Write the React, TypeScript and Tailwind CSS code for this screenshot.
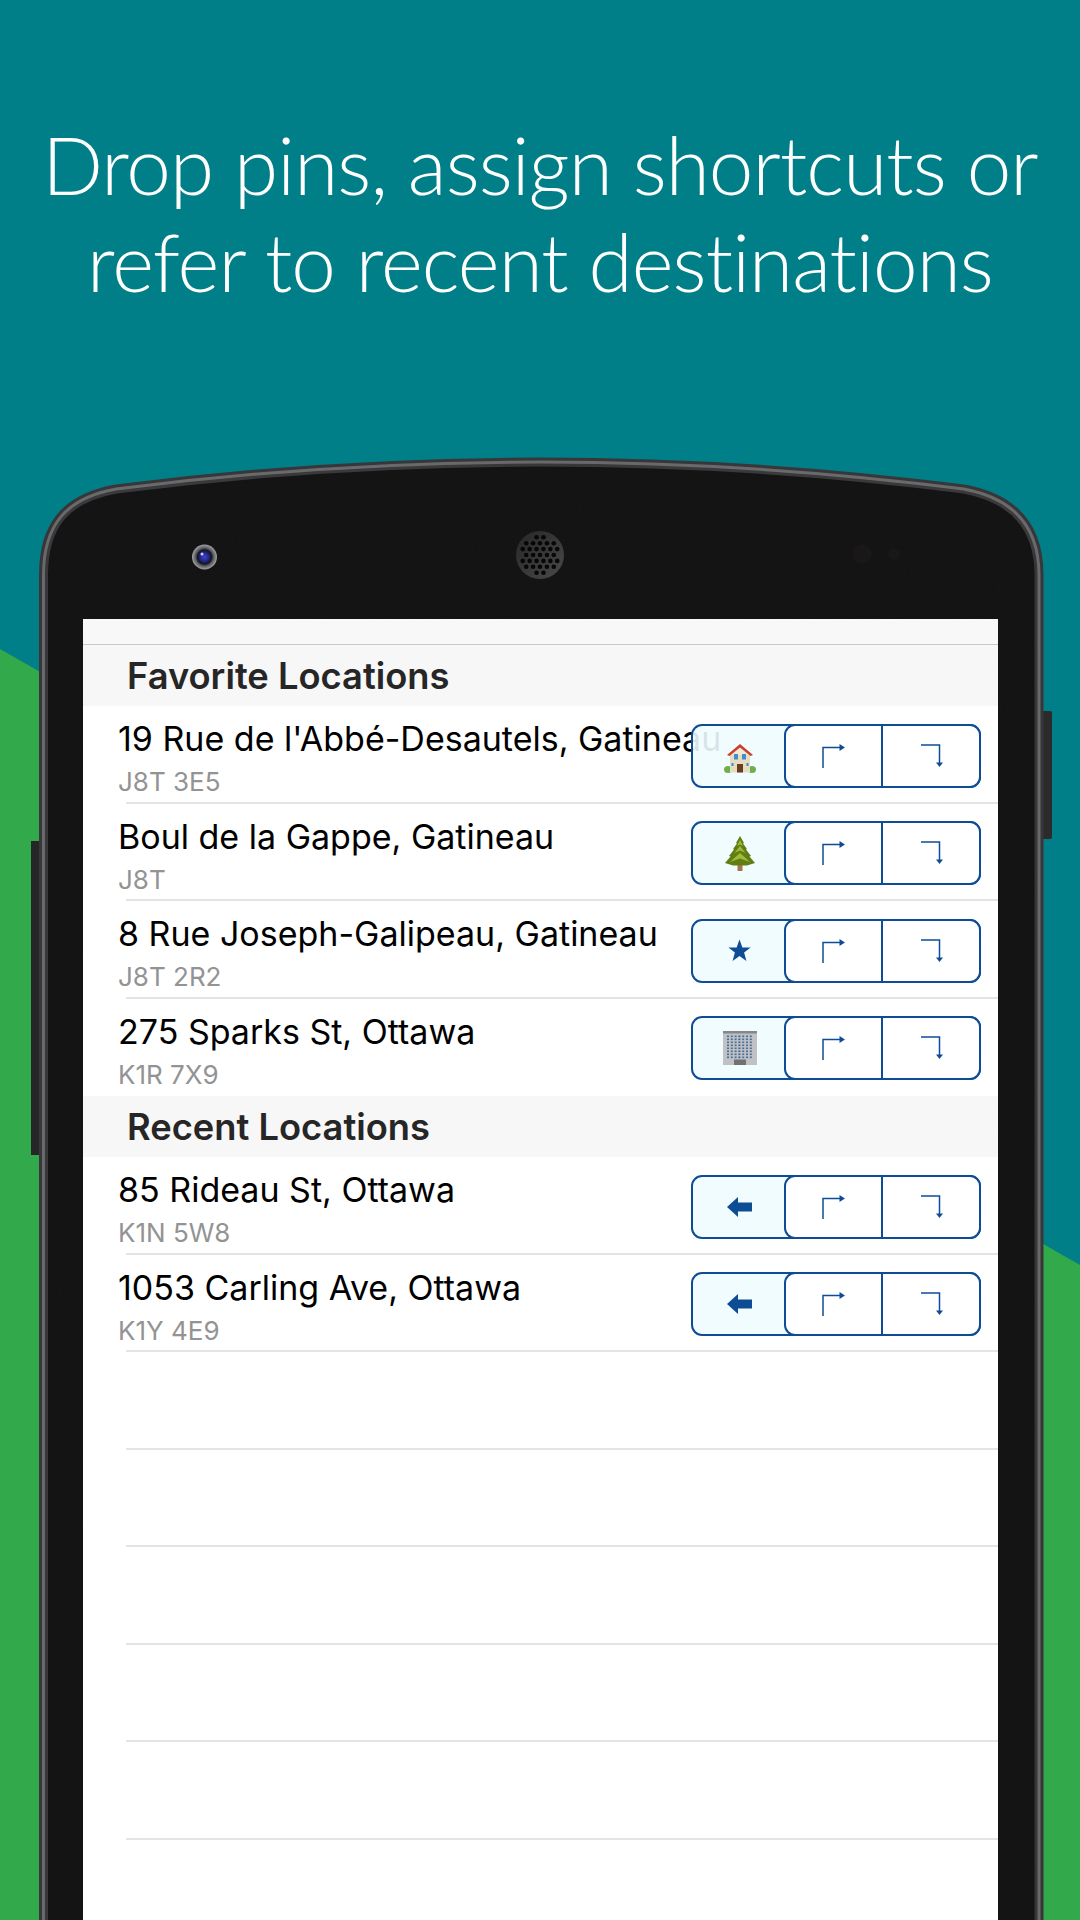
import React from "react";

const BLUE = "#0f4c96";

const PHONE_EDGE =
  "M43.5 1930 L43.5 575 C43.5 525 66 498 116 489 Q540 435 964 489 C1012 498 1039 525 1039 575 L1039 1930 Z";

// speaker grille holes, packed in rows
const speakerDots: { x: number; y: number }[] = [];
for (let row = -4; row <= 4; row++) {
  for (let col = -4; col <= 4; col++) {
    const x = col * 6.9 + (row % 2 ? 3.45 : 0);
    const y = row * 5.9;
    if (x * x + y * y < 20.5 * 20.5) speakerDots.push({ x, y });
  }
}

function Backdrop() {
  return (
    <svg className="absolute inset-0" width="1080" height="1920" viewBox="0 0 1080 1920">
      <defs>
        <radialGradient id="lens" cx="50%" cy="50%" r="50%">
          <stop offset="0%" stopColor="#3c44d8" />
          <stop offset="38%" stopColor="#20247a" />
          <stop offset="56%" stopColor="#141420" />
          <stop offset="72%" stopColor="#5a5c60" />
          <stop offset="100%" stopColor="#a0a2a6" />
        </radialGradient>
        <linearGradient id="grille" x1="0" y1="0" x2="1" y2="1">
          <stop offset="0%" stopColor="#262626" />
          <stop offset="100%" stopColor="#4a4a4a" />
        </linearGradient>
        <filter id="grain" x="0" y="0" width="100%" height="100%">
          <feTurbulence type="fractalNoise" baseFrequency="0.9" numOctaves="2" />
          <feColorMatrix values="0 0 0 0 1  0 0 0 0 1  0 0 0 0 1  0 0 0 0.025 0" />
        </filter>
        <clipPath id="bezel">
          <path d={PHONE_EDGE} />
        </clipPath>
      </defs>
      <polygon points="0,649 1080,1265 1080,1920 0,1920" fill="#32a94a" />
      {/* side buttons */}
      <rect x="31" y="841" width="10" height="314" fill="#262626" />
      <rect x="1040" y="711" width="12" height="128" rx="2" fill="#2b2b2b" />
      {/* phone body and metal rim */}
      <path d={PHONE_EDGE} fill="#111111" stroke="#37373a" strokeWidth="9" />
      <path d={PHONE_EDGE} fill="none" stroke="#69696c" strokeWidth="3" />
      <rect x="48" y="466" width="986" height="1454" filter="url(#grain)" clipPath="url(#bezel)" />
      {/* front camera */}
      <circle cx="204.5" cy="557" r="12.5" fill="url(#lens)" />
      <circle cx="202" cy="554" r="1.5" fill="#c8d0ff" />
      {/* speaker */}
      <circle cx="540" cy="555" r="24" fill="url(#grille)" />
      {speakerDots.map((d, i) => (
        <circle key={i} cx={540 + d.x} cy={555 + d.y} r="2.3" fill="#070707" />
      ))}
      {/* proximity sensors */}
      <circle cx="862" cy="554" r="10" fill="#191717" />
      <circle cx="894" cy="554" r="6" fill="#1a1717" />
    </svg>
  );
}

function TurnRight() {
  return (
    <svg width="25" height="24" viewBox="0 0 25 24" fill="none">
      <path d="M2 24 V3.5 H19" stroke={BLUE} strokeWidth="1.5" />
      <path d="M18.5 0 L24 3.5 L18.5 7 Z" fill={BLUE} />
    </svg>
  );
}

function TurnDown() {
  return (
    <svg width="24" height="24" viewBox="0 0 24 24" fill="none">
      <path d="M1 1 H19.5 V19" stroke={BLUE} strokeWidth="1.5" />
      <path d="M16 18.5 H23 L19.5 23 Z" fill={BLUE} />
    </svg>
  );
}

function HouseIcon() {
  return (
    <svg width="32" height="30" viewBox="0 0 32 30" className="mt-[4px]">
      <ellipse cx="4" cy="26.5" rx="4" ry="3.5" fill="#6fae4e" />
      <ellipse cx="28" cy="26.5" rx="4" ry="3.5" fill="#6fae4e" />
      <rect x="6" y="11" width="20" height="18.5" fill="#e6dcc0" />
      <path d="M6 12 L16 4 L26 12 Z" fill="#f2e9d3" />
      <path d="M3 12 L16 1 L29 12 L26.5 13 L16 4.5 L5.5 13 Z" fill="#c9402e" />
      <rect x="10" y="11" width="4" height="5.5" fill="#3f8fd0" />
      <rect x="18" y="11" width="4" height="5.5" fill="#3f8fd0" />
      <rect x="7.5" y="20" width="2" height="3" fill="#3f8fd0" />
      <rect x="22.5" y="20" width="2" height="3" fill="#3f8fd0" />
      <rect x="13" y="21" width="6" height="8.5" fill="#6b3b22" />
    </svg>
  );
}

function TreeIcon() {
  return (
    <svg width="30" height="35" viewBox="0 0 30 35">
      <rect x="12.5" y="28" width="5" height="7" fill="#a8744c" />
      <path
        d="M15 0 L19 7 L18 7.5 L22 13 L21 13.5 L26 20 L24.5 20.5 L30 27 L22 29.5 H8 L0 27 L5.5 20.5 L4 20 L9 13.5 L8 13 L12 7.5 L11 7 Z"
        fill="#5f7f14"
      />
      <path
        d="M15 4 L18 10 L15 8.5 L12 10 Z M15 10 L20.5 17 L15 14.5 L9.5 17 Z M15 17 L25 26 L15 22.5 L5 26 Z"
        fill="#a3b93a"
      />
    </svg>
  );
}

function StarIcon() {
  return (
    <svg width="23" height="23" viewBox="0 0 24 24">
      <path d="M12 0.5 L15 8.8 L23.6 8.9 L16.8 14.2 L19.2 23 L12 17.8 L4.8 23 L7.2 14.2 L0.4 8.9 L9 8.8 Z" fill={BLUE} />
    </svg>
  );
}

function BuildingIcon() {
  const cells: React.ReactNode[] = [];
  for (let r = 0; r < 8; r++) {
    for (let c = 0; c < 7; c++) {
      cells.push(
        <rect
          key={`${r}-${c}`}
          x={4 + c * 3.8}
          y={4.5 + r * 3}
          width="2"
          height="1.6"
          fill={c === 3 ? "#33649c" : "#4a6f96"}
        />,
      );
    }
  }
  return (
    <svg width="34" height="34" viewBox="0 0 34 34">
      <rect width="34" height="34" fill="#bfc1c4" />
      <rect width="34" height="2.5" fill="#85878a" />
      {cells}
      <rect x="11" y="28.5" width="12" height="5.5" fill="#6f7174" />
    </svg>
  );
}

function BackArrowIcon() {
  return (
    <svg width="25" height="20" viewBox="0 0 25 20">
      <path d="M0 10 L11 0 V5.5 H25 V14.5 H11 V20 Z" fill={BLUE} />
    </svg>
  );
}

function ButtonGroup({ icon }: { icon: React.ReactNode }) {
  return (
    <div className="absolute right-[17px] top-[17.5px] flex h-[64px] w-[290px] rounded-[11px] border-2 border-[#0f4c96] bg-[#f0fcff]/90">
      <div className="flex w-[92px] items-center justify-center pl-[2px]">{icon}</div>
      <div className="-my-[2px] -mr-[2px] flex w-[198px] rounded-[11px] border-2 border-[#0f4c96] bg-white">
        <div className="flex flex-1 items-center justify-center border-r-2 border-[#0f4c96]">
          <TurnRight />
        </div>
        <div className="flex w-[96px] items-center justify-center pl-[2px]">
          <TurnDown />
        </div>
      </div>
    </div>
  );
}

function LocationRow({
  title,
  code,
  icon,
  last,
}: {
  title: string;
  code: string;
  icon: React.ReactNode;
  last?: boolean;
}) {
  return (
    <div className={`relative ml-[43px] h-[97.5px] ${last ? "" : "border-b-2 border-[#e4e4e4]"}`}>
      <div className="-ml-[8px] whitespace-nowrap pt-[13px]">
        <div className="text-[34px] leading-[40px] text-black">{title}</div>
        <div className="mt-[8px] text-[26px] leading-[30px] text-[#939393]">{code}</div>
      </div>
      <ButtonGroup icon={icon} />
    </div>
  );
}

function SectionHeader({ label }: { label: string }) {
  return (
    <div className="flex h-[61px] items-center bg-[#f7f7f7] pl-[44px] pt-[2px] text-[36.3px] font-semibold text-[#262626]">
      {label}
    </div>
  );
}

const favorites = [
  { title: "19 Rue de l'Abbé-Desautels, Gatineau", code: "J8T 3E5", icon: <HouseIcon /> },
  { title: "Boul de la Gappe, Gatineau", code: "J8T", icon: <TreeIcon /> },
  { title: "8 Rue Joseph-Galipeau, Gatineau", code: "J8T 2R2", icon: <StarIcon /> },
  { title: "275 Sparks St, Ottawa", code: "K1R 7X9", icon: <BuildingIcon /> },
];

const recents = [
  { title: "85 Rideau St, Ottawa", code: "K1N 5W8", icon: <BackArrowIcon /> },
  { title: "1053 Carling Ave, Ottawa", code: "K1Y 4E9", icon: <BackArrowIcon /> },
];

export default function App() {
  return (
    <div className="relative flex h-[1920px] w-[1080px] flex-col overflow-hidden bg-[#007f88] font-['Inter',sans-serif]">
      <Backdrop />

      {/* Headline */}
      <h1 className="relative h-[619px] pt-[116px] text-center font-['Lato',sans-serif] text-[80px] font-light leading-[97px] tracking-[-0.9px] text-white">
        Drop pins, assign shortcuts or
        <br />
        refer to recent destinations
      </h1>

      {/* Phone screen */}
      <div className="relative ml-[83px] w-[915px] flex-1 bg-white">
        <div className="h-[26px] border-b border-[#c8c8c8] bg-[#f8f8f8]" />
        <SectionHeader label="Favorite Locations" />
        {favorites.map((f, i) => (
          <LocationRow key={f.title} {...f} last={i === favorites.length - 1} />
        ))}
        <SectionHeader label="Recent Locations" />
        {recents.map((r) => (
          <LocationRow key={r.title} {...r} />
        ))}
        {[0, 1, 2, 3, 4].map((i) => (
          <div key={i} className="ml-[43px] h-[97.5px] border-b-2 border-[#e4e4e4]" />
        ))}
      </div>
    </div>
  );
}
